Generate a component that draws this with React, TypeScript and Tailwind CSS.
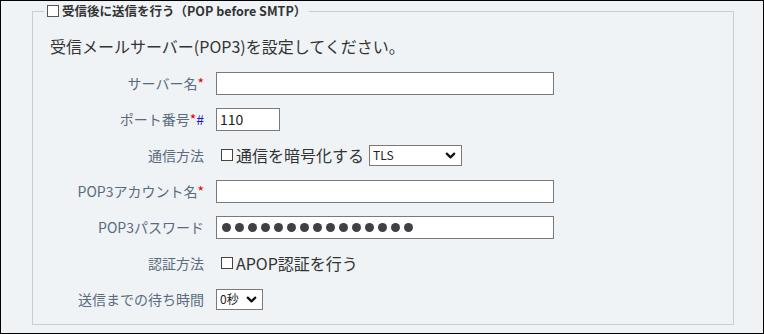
import { ChevronDown } from 'lucide-react'
import type { ReactNode } from 'react'

const font = { fontFamily: '"Noto Sans CJK JP", "Noto Sans", sans-serif' }

const Req = () => <span className="text-[#e60000]">*</span>

function Row({ label, children }: { label: ReactNode; children: ReactNode }) {
  return (
    <div className="flex h-[36px] items-center">
      <div className="w-[171px] shrink-0 text-right text-[14px] text-[#5b6b7d]">{label}</div>
      <div className="ml-[12px] flex items-center">{children}</div>
    </div>
  )
}

const TextBox = ({ className = '', children }: { className?: string; children?: ReactNode }) => (
  <div className={'flex h-[23px] items-center border border-[#7a7a7a] bg-white px-[3px] text-[14px] text-[#222] ' + className}>
    {children}
  </div>
)

const Box = () => <span className="mr-[3px] inline-block h-[12px] w-[12px] border border-[#444] bg-white" />

function Select({ value, className = '' }: { value: string; className?: string }) {
  return (
    <div
      className={
        'flex h-[21px] items-center justify-between border border-[#7a7a7a] bg-white pl-[3px] pr-[3px] text-[12px] text-[#222] ' +
        className
      }
    >
      <span>{value}</span>
      <ChevronDown className="h-[15px] w-[15px] text-[#111]" strokeWidth={3.5} />
    </div>
  )
}

const dots = Array.from({ length: 15 }, (_, i) => i)

export default function App() {
  return (
    <div style={font} className="h-[334px] w-[764px] border border-black bg-[#eff3f6] pl-[31px] pr-[29px] pt-[2px]">
      <fieldset className="h-[322px] border border-[#c9cdd1] px-0 pb-0">
        <legend className="ml-[11px] flex items-center px-[3px] text-[12.5px] font-bold leading-[16px] text-[#333]">
          <span className="mr-[3px] inline-block h-[12px] w-[12px] border border-[#555] bg-white" />
          受信後に送信を行う（POP before SMTP）
        </legend>
        <div className="mt-[15px] pl-[17px] text-[16px] leading-[24px] text-[#333]">
          受信メールサーバー(POP3)を設定してください。
        </div>
        <div className="mt-[7px] flex flex-col">
          <Row label={<>サーバー名<Req /></>}>
            <TextBox className="w-[338px]" />
          </Row>
          <Row label={<>ポート番号<Req /><span className="text-[#1a1ad6]">#</span></>}>
            <TextBox className="w-[64px]">110</TextBox>
          </Row>
          <Row label="通信方法">
            <span className="ml-[5px] flex items-center text-[16px] text-[#333]">
              <Box />
              通信を暗号化する
            </span>
            <Select value="TLS" className="ml-[5px] w-[93px]" />
          </Row>
          <Row label={<>POP3アカウント名<Req /></>}>
            <TextBox className="w-[338px]" />
          </Row>
          <Row label="POP3パスワード">
            <TextBox className="w-[338px] gap-[4px] pl-[5px]">
              {dots.map(i => (
                <span key={i} className="inline-block h-[9px] w-[9px] rounded-full bg-[#3f4045]" />
              ))}
            </TextBox>
          </Row>
          <Row label="認証方法">
            <span className="ml-[5px] flex items-center text-[16px] text-[#333]">
              <Box />
              APOP認証を行う
            </span>
          </Row>
          <Row label="送信までの待ち時間">
            <Select value="0秒" className="w-[47px]" />
          </Row>
        </div>
      </fieldset>
    </div>
  )
}
